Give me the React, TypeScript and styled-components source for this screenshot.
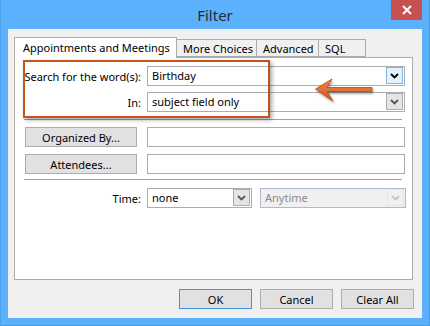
import styled, { createGlobalStyle } from 'styled-components';

const GlobalStyle = createGlobalStyle`
  html, body {
    margin: 0;
    padding: 0;
    overflow: hidden;
  }
  body {
    font-family: 'Noto Sans', 'Open Sans', sans-serif;
  }
`;

const StyledWindow = styled.div`
  width: 430px;
  height: 326px;
  display: flex;
  flex-direction: column;
  background-color: #5cb1fe;
  box-sizing: border-box;
  border-left: 1px solid #4a9ee8;
  border-right: 1px solid #4a9ee8;
  border-bottom: 1px solid #4a9ee8;
`;

const StyledTitleBar = styled.div`
  height: 29px;
  display: grid;
  grid-template-columns: 1fr auto 1fr;
  flex-shrink: 0;
`;

const StyledTitle = styled.div`
  align-self: center;
  font-size: 15px;
  color: #2b2b2b;
  line-height: 20px;
  padding-top: 1px;
`;

const StyledCloseButton = styled.div`
  justify-self: end;
  align-self: start;
  width: 31px;
  height: 20px;
  margin-right: 7px;
  background-color: #c75050;
  display: flex;
  align-items: center;
  justify-content: center;
`;

const StyledBody = styled.div`
  flex: 1;
  margin: 0 7px 7px;
  background-color: #f0f0f0;
  padding: 8px 9px 8px 6px;
  display: flex;
  flex-direction: column;
  font-size: 11px;
  color: #000000;
`;

const StyledTabs = styled.div`
  height: 20px;
  display: flex;
  align-items: flex-end;
  position: relative;
  z-index: 1;
`;

const StyledTab = styled.div<{ $width: number; $active?: boolean }>`
  width: ${(p) => p.$width}px;
  height: ${(p) => (p.$active ? 21 : 18)}px;
  box-sizing: border-box;
  border: 1px solid #acacac;
  border-bottom: ${(p) => (p.$active ? 'none' : '1px solid #acacac')};
  border-left: ${(p) => (p.$active ? '1px solid #acacac' : 'none')};
  background-color: ${(p) => (p.$active ? '#ffffff' : '#f0f0f0')};
  padding: ${(p) => (p.$active ? '2px 0 0 8px' : '1px 0 0 6px')};
  margin-bottom: ${(p) => (p.$active ? -1 : 0)}px;
  line-height: 15px;
  white-space: nowrap;
`;

const StyledPanel = styled.div`
  height: 223px;
  box-sizing: border-box;
  border: 1px solid #acacac;
  background-color: #ffffff;
  padding: 8px 7px 0 9px;
  display: flex;
  flex-direction: column;
  position: relative;
`;

const StyledFieldRow = styled.div<{ $top?: number }>`
  display: grid;
  grid-template-columns: 117px 1fr;
  column-gap: 6px;
  align-items: center;
  margin-top: ${(p) => p.$top ?? 0}px;
`;

const StyledLabel = styled.div`
  text-align: right;
  white-space: nowrap;
`;

const StyledInput = styled.div`
  height: 20px;
  box-sizing: border-box;
  border: 1px solid #abadb3;
  background-color: #ffffff;
`;

const StyledSelect = styled.div<{ $width?: number; $disabled?: boolean }>`
  width: ${(p) => (p.$width ? `${p.$width}px` : 'auto')};
  height: 20px;
  box-sizing: border-box;
  border: 1px solid ${(p) => (p.$disabled ? '#adb9cd' : '#abadb3')};
  background-color: ${(p) => (p.$disabled ? '#f0f0f0' : '#ffffff')};
  color: ${(p) => (p.$disabled ? '#8a8a8a' : '#000000')};
  display: flex;
  align-items: stretch;
  padding: 0 1px 0 4px;
  line-height: 18px;
`;

const StyledSelectText = styled.div`
  flex: 1;
`;

const StyledDropButton = styled.div<{ $state: 'hot' | 'normal' | 'disabled' }>`
  width: 17px;
  margin: 0 0 1px;
  box-sizing: border-box;
  border: 1px solid
    ${(p) => (p.$state === 'hot' ? '#7eb4ea' : p.$state === 'normal' ? '#acacac' : '#e6e6e6')};
  background-color: ${(p) =>
    p.$state === 'hot' ? '#e5f1fb' : p.$state === 'normal' ? '#e5e5e5' : '#f0f0f0'};
  color: ${(p) => (p.$state === 'hot' ? '#000000' : p.$state === 'normal' ? '#555555' : '#c4c4c4')};
  display: flex;
  align-items: center;
  justify-content: center;
`;

const StyledSeparator = styled.div<{ $top: number }>`
  height: 1px;
  background-color: #a0a0a0;
  margin: ${(p) => p.$top}px 3px 0 0;
`;

const StyledButton = styled.div<{ $width: number; $default?: boolean }>`
  width: ${(p) => p.$width}px;
  height: 20px;
  box-sizing: border-box;
  border: 1px solid ${(p) => (p.$default ? '#3c94e2' : '#adadad')};
  background-color: #e1e1e1;
  display: flex;
  align-items: center;
  justify-content: center;
  line-height: 15px;
`;

const StyledPersonButton = styled(StyledButton)`
  margin-left: 1px;
`;

const StyledTimeControls = styled.div`
  display: flex;
  gap: 8px;
`;

const StyledFooter = styled.div`
  margin-top: 9px;
  margin-right: -1px;
  display: flex;
  justify-content: flex-end;
  gap: 8px;
`;

const StyledHighlight = styled.div`
  position: absolute;
  left: 8px;
  top: 2px;
  width: 247px;
  height: 58px;
  box-sizing: border-box;
  border: 2px solid #c4541d;
  box-shadow: 2px 2px 4px rgba(0, 0, 0, 0.35);
  pointer-events: none;
`;

const StyledArrow = styled.svg`
  position: absolute;
  left: 299px;
  top: 20px;
  filter: drop-shadow(1px 2px 1px rgba(0, 0, 0, 0.35));
`;

const Chevron = () => (
  <svg width="9" height="6" viewBox="0 0 9 6">
    <path d="M1 1 L4.5 4.5 L8 1" fill="none" stroke="currentColor" strokeWidth="1.8" />
  </svg>
);

const App = () => (
  <StyledWindow>
    <GlobalStyle />
    <StyledTitleBar>
      <div />
      <StyledTitle>Filter</StyledTitle>
      <StyledCloseButton>
        <svg width="10" height="10" viewBox="0 0 10 10">
          <path d="M1 1 L9 9 M9 1 L1 9" stroke="#ffffff" strokeWidth="2" />
        </svg>
      </StyledCloseButton>
    </StyledTitleBar>
    <StyledBody>
      <StyledTabs>
        <StyledTab $width={163} $active>
          Appointments and Meetings
        </StyledTab>
        <StyledTab $width={80}>More Choices</StyledTab>
        <StyledTab $width={62}>Advanced</StyledTab>
        <StyledTab $width={47}>SQL</StyledTab>
      </StyledTabs>
      <StyledPanel>
        <StyledFieldRow>
          <StyledLabel>Search for the word(s):</StyledLabel>
          <StyledSelect>
            <StyledSelectText>Birthday</StyledSelectText>
            <StyledDropButton $state="hot">
              <Chevron />
            </StyledDropButton>
          </StyledSelect>
        </StyledFieldRow>
        <StyledFieldRow $top={6}>
          <StyledLabel>In:</StyledLabel>
          <StyledSelect>
            <StyledSelectText>subject field only</StyledSelectText>
            <StyledDropButton $state="normal">
              <Chevron />
            </StyledDropButton>
          </StyledSelect>
        </StyledFieldRow>
        <StyledSeparator $top={7} />
        <StyledFieldRow $top={7}>
          <StyledPersonButton $width={112}>Organized By...</StyledPersonButton>
          <StyledInput />
        </StyledFieldRow>
        <StyledFieldRow $top={7}>
          <StyledPersonButton $width={112}>Attendees...</StyledPersonButton>
          <StyledInput />
        </StyledFieldRow>
        <StyledSeparator $top={5} />
        <StyledFieldRow $top={8}>
          <StyledLabel>Time:</StyledLabel>
          <StyledTimeControls>
            <StyledSelect $width={105}>
              <StyledSelectText>none</StyledSelectText>
              <StyledDropButton $state="normal">
                <Chevron />
              </StyledDropButton>
            </StyledSelect>
            <StyledSelect $width={146} $disabled>
              <StyledSelectText>Anytime</StyledSelectText>
              <StyledDropButton $state="disabled">
                <Chevron />
              </StyledDropButton>
            </StyledSelect>
          </StyledTimeControls>
        </StyledFieldRow>

        <StyledHighlight />
        <StyledArrow width="62" height="26" viewBox="0 0 62 26">
          <defs>
            <linearGradient id="arrowFill" x1="0" y1="0" x2="0" y2="1">
              <stop offset="0" stopColor="#f08a4b" />
              <stop offset="1" stopColor="#d4561a" />
            </linearGradient>
          </defs>
          <path
            d="M1.5 11 L18 1 L13 9.5 L58 9.5 L58 13.5 L13 13.5 L19 23 Z"
            fill="url(#arrowFill)"
            stroke="#b9460f"
            strokeWidth="0.8"
            strokeLinejoin="round"
          />
        </StyledArrow>
      </StyledPanel>
      <StyledFooter>
        <StyledButton $width={73} $default>
          OK
        </StyledButton>
        <StyledButton $width={73}>Cancel</StyledButton>
        <StyledButton $width={73}>Clear All</StyledButton>
      </StyledFooter>
    </StyledBody>
  </StyledWindow>
);

export default App;
